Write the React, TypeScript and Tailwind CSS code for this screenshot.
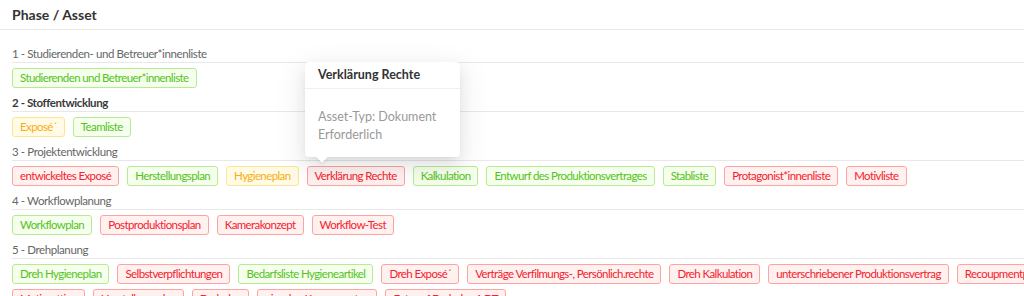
type Tone = 'green' | 'red' | 'gold';

interface Section {
  title: string;
  active?: boolean;
  assets: [string, Tone][];
}

const sections: Section[] = [
  {
    title: '1 - Studierenden- und Betreuer*innenliste',
    assets: [['Studierenden und Betreuer*innenliste', 'green']],
  },
  {
    title: '2 - Stoffentwicklung',
    active: true,
    assets: [
      ['Exposé´', 'gold'],
      ['Teamliste', 'green'],
    ],
  },
  {
    title: '3 - Projektentwicklung',
    assets: [
      ['entwickeltes Exposé', 'red'],
      ['Herstellungsplan', 'green'],
      ['Hygieneplan', 'gold'],
      ['Verklärung Rechte', 'red'],
      ['Kalkulation', 'green'],
      ['Entwurf des Produktionsvertrages', 'green'],
      ['Stabliste', 'green'],
      ['Protagonist*innenliste', 'red'],
      ['Motivliste', 'red'],
    ],
  },
  {
    title: '4 - Workflowplanung',
    assets: [
      ['Workflowplan', 'green'],
      ['Postproduktionsplan', 'red'],
      ['Kamerakonzept', 'red'],
      ['Workflow-Test', 'red'],
    ],
  },
  {
    title: '5 - Drehplanung',
    assets: [
      ['Dreh Hygieneplan', 'green'],
      ['Selbstverpflichtungen', 'red'],
      ['Bedarfsliste Hygieneartikel', 'green'],
      ['Dreh Exposé´', 'red'],
      ['Verträge Verfilmungs-, Persönlich.rechte', 'red'],
      ['Dreh Kalkulation', 'red'],
      ['unterschriebener Produktionsvertrag', 'red'],
      ['Recoupmentplan', 'red'],
      ['Motivsetting', 'red'],
      ['Herstellungsplan', 'red'],
      ['Drehplan', 'red'],
      ['einzelne Komponenten', 'red'],
      ['Entwurf Drehplan 1.DT', 'red'],
    ],
  },
];

const toneClass: Record<Tone, string> = {
  green: 'text-[#52c41a] bg-[#f6ffed] border-[#b7eb8f]',
  red: 'text-[#f5222d] bg-[#fff1f0] border-[#ffa39e]',
  gold: 'text-[#faad14] bg-[#fffbe6] border-[#ffe58f]',
};

function AssetTag({ label, tone }: { label: string; tone: Tone }) {
  return (
    <span
      className={`inline-block h-5 px-[7px] border rounded-[3px] text-[11.5px] tracking-[-0.6px] leading-[18px] whitespace-nowrap ${toneClass[tone]}`}
    >
      {label}
    </span>
  );
}

function PhaseSection({ section }: { section: Section }) {
  return (
    <div className="mb-[7px]">
      <div
        className={`h-[17px] border-b border-[#e8e8e8] text-[11.5px] tracking-[-0.4px] leading-[15px] whitespace-nowrap ${
          section.active ? 'font-bold text-[#3a3a3a]' : 'text-[#666]'
        }`}
      >
        {section.title}
      </div>
      <div className="mt-[5px] flex flex-wrap gap-x-2 gap-y-[5px]">
        {section.assets.map(([label, tone], i) => (
          <AssetTag key={i} label={label} tone={tone} />
        ))}
      </div>
    </div>
  );
}

export default function App() {
  return (
    <div className="relative w-[1024px] h-[296px] overflow-hidden bg-white font-['Lato','Liberation_Sans',sans-serif]">
      <div className="w-[1100px]">
        {/* Header */}
        <div className="h-[30px] flex items-center px-3 border-b border-[#e8e8e8] text-sm font-bold text-[#333]">
          Phase / Asset
        </div>

        {/* Phases */}
        <div className="pt-4 pl-3">
          {sections.map((s) => (
            <PhaseSection key={s.title} section={s} />
          ))}
        </div>
      </div>

      {/* Popover over "Verklärung Rechte" */}
      <div className="absolute left-[305px] top-[62px] w-[155px] h-[95px] bg-white rounded-[4px] shadow-[0_3px_6px_-4px_rgba(0,0,0,0.12),0_6px_16px_0_rgba(0,0,0,0.08),0_9px_28px_8px_rgba(0,0,0,0.05)]">
        <div className="h-[27px] px-[13px] flex items-center border-b border-[#f0f0f0] text-[12.5px] font-bold text-[#333] whitespace-nowrap">
          Verklärung Rechte
        </div>
        <div className="px-[13px] pt-[19px] text-[12.5px] leading-[18px] text-[#999] whitespace-nowrap">
          <div>Asset-Typ: Dokument</div>
          <div>Erforderlich</div>
        </div>
        <div className="absolute left-[13px] -bottom-[4px] w-2 h-2 bg-white rotate-45 shadow-[2px_2px_3px_rgba(0,0,0,0.06)]" />
      </div>
    </div>
  );
}
